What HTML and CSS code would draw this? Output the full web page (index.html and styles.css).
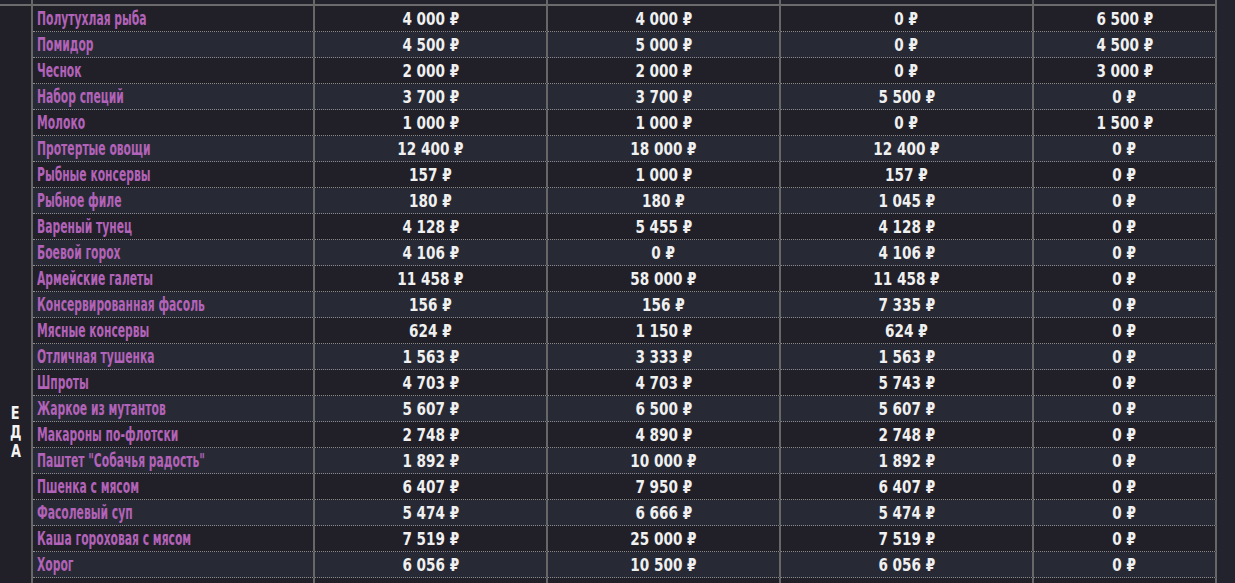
FILE: index.html
```html
<!DOCTYPE html>
<html lang="ru">
<head>
<meta charset="utf-8">
<title>Цены</title>
<link rel="stylesheet" href="styles.css">
</head>
<body>
<table class="prices">
  <colgroup>
    <col class="c-cat">
    <col class="c-name">
    <col class="c-a">
    <col class="c-b">
    <col class="c-c">
    <col class="c-d">
  </colgroup>
  <tbody>
    <tr class="prev"><td></td><td></td><td></td><td></td><td></td><td></td></tr>
    <tr>
      <td class="cat" rowspan="23"><div class="letters"><span>Е</span><span>Д</span><span>А</span></div></td>
      <td class="name"><span>Полутухлая рыба</span></td><td><span>4 000 ₽</span></td><td><span>4 000 ₽</span></td><td><span>0 ₽</span></td><td><span>6 500 ₽</span></td>
    </tr>
    <tr><td class="name"><span>Помидор</span></td><td><span>4 500 ₽</span></td><td><span>5 000 ₽</span></td><td><span>0 ₽</span></td><td><span>4 500 ₽</span></td></tr>
    <tr><td class="name"><span>Чеснок</span></td><td><span>2 000 ₽</span></td><td><span>2 000 ₽</span></td><td><span>0 ₽</span></td><td><span>3 000 ₽</span></td></tr>
    <tr><td class="name"><span>Набор специй</span></td><td><span>3 700 ₽</span></td><td><span>3 700 ₽</span></td><td><span>5 500 ₽</span></td><td><span>0 ₽</span></td></tr>
    <tr><td class="name"><span>Молоко</span></td><td><span>1 000 ₽</span></td><td><span>1 000 ₽</span></td><td><span>0 ₽</span></td><td><span>1 500 ₽</span></td></tr>
    <tr><td class="name"><span>Протертые овощи</span></td><td><span>12 400 ₽</span></td><td><span>18 000 ₽</span></td><td><span>12 400 ₽</span></td><td><span>0 ₽</span></td></tr>
    <tr><td class="name"><span>Рыбные консервы</span></td><td><span>157 ₽</span></td><td><span>1 000 ₽</span></td><td><span>157 ₽</span></td><td><span>0 ₽</span></td></tr>
    <tr><td class="name"><span>Рыбное филе</span></td><td><span>180 ₽</span></td><td><span>180 ₽</span></td><td><span>1 045 ₽</span></td><td><span>0 ₽</span></td></tr>
    <tr><td class="name"><span>Вареный тунец</span></td><td><span>4 128 ₽</span></td><td><span>5 455 ₽</span></td><td><span>4 128 ₽</span></td><td><span>0 ₽</span></td></tr>
    <tr><td class="name"><span>Боевой горох</span></td><td><span>4 106 ₽</span></td><td><span>0 ₽</span></td><td><span>4 106 ₽</span></td><td><span>0 ₽</span></td></tr>
    <tr><td class="name"><span>Армейские галеты</span></td><td><span>11 458 ₽</span></td><td><span>58 000 ₽</span></td><td><span>11 458 ₽</span></td><td><span>0 ₽</span></td></tr>
    <tr><td class="name"><span>Консервированная фасоль</span></td><td><span>156 ₽</span></td><td><span>156 ₽</span></td><td><span>7 335 ₽</span></td><td><span>0 ₽</span></td></tr>
    <tr><td class="name"><span>Мясные консервы</span></td><td><span>624 ₽</span></td><td><span>1 150 ₽</span></td><td><span>624 ₽</span></td><td><span>0 ₽</span></td></tr>
    <tr><td class="name"><span>Отличная тушенка</span></td><td><span>1 563 ₽</span></td><td><span>3 333 ₽</span></td><td><span>1 563 ₽</span></td><td><span>0 ₽</span></td></tr>
    <tr><td class="name"><span>Шпроты</span></td><td><span>4 703 ₽</span></td><td><span>4 703 ₽</span></td><td><span>5 743 ₽</span></td><td><span>0 ₽</span></td></tr>
    <tr><td class="name"><span>Жаркое из мутантов</span></td><td><span>5 607 ₽</span></td><td><span>6 500 ₽</span></td><td><span>5 607 ₽</span></td><td><span>0 ₽</span></td></tr>
    <tr><td class="name"><span>Макароны по-флотски</span></td><td><span>2 748 ₽</span></td><td><span>4 890 ₽</span></td><td><span>2 748 ₽</span></td><td><span>0 ₽</span></td></tr>
    <tr><td class="name"><span>Паштет "Собачья радость"</span></td><td><span>1 892 ₽</span></td><td><span>10 000 ₽</span></td><td><span>1 892 ₽</span></td><td><span>0 ₽</span></td></tr>
    <tr><td class="name"><span>Пшенка с мясом</span></td><td><span>6 407 ₽</span></td><td><span>7 950 ₽</span></td><td><span>6 407 ₽</span></td><td><span>0 ₽</span></td></tr>
    <tr><td class="name"><span>Фасолевый суп</span></td><td><span>5 474 ₽</span></td><td><span>6 666 ₽</span></td><td><span>5 474 ₽</span></td><td><span>0 ₽</span></td></tr>
    <tr><td class="name"><span>Каша гороховая с мясом</span></td><td><span>7 519 ₽</span></td><td><span>25 000 ₽</span></td><td><span>7 519 ₽</span></td><td><span>0 ₽</span></td></tr>
    <tr><td class="name"><span>Хорог</span></td><td><span>6 056 ₽</span></td><td><span>10 500 ₽</span></td><td><span>6 056 ₽</span></td><td><span>0 ₽</span></td></tr>
    <tr><td class="name"></td><td></td><td></td><td></td><td><span>0 ₽</span></td></tr>
  </tbody>
</table>
</body>
</html>
```
FILE: styles.css
```css
html, body {
  margin: 0;
  padding: 0;
  background: #22232c;
  overflow: hidden;
}

.prices {
  table-layout: fixed;
  border-collapse: separate;
  border-spacing: 0;
  width: 1217px;
  font-family: "DejaVu Sans Condensed", "DejaVu Sans", sans-serif;
}

.c-cat { width: 33px; }
.c-name { width: 282px; }
.c-a { width: 233px; }
.c-b { width: 233px; }
.c-c { width: 253px; }
.c-d { width: 183px; }

.prices td {
  box-sizing: border-box;
  padding: 0;
  height: 26px;
  line-height: 25px;
  border-right: 2px solid #676767;
  border-bottom: 1px dotted #8a8a8a;
  text-align: center;
  color: #f0f0f0;
  font-weight: bold;
  font-size: 18px;
  white-space: nowrap;
  overflow: hidden;
}

.prices td span {
  display: inline-block;
  transform: scaleX(0.84);
}

.prices tr:nth-child(even) td { background: #212029; }
.prices tr:nth-child(odd) td { background: #272a35; }

.prices tr.prev td {
  height: 6px;
  line-height: 4px;
  border-bottom: 2px solid #6b6b6b;
  background: #22232c;
}

.prices td.name {
  text-align: left;
  padding-left: 4px;
  font-weight: bold;
  color: #b262b8;
  font-size: 19px;
}

.prices td.name span {
  transform: scaleX(0.63);
  transform-origin: left center;
}

.prices td.cat {
  background: #23252e;
  border-bottom: none;
  vertical-align: top;
  padding-top: 398px;
}

.letters {
  display: flex;
  flex-direction: column;
  align-items: center;
  line-height: 19px;
  font-size: 17px;
  font-weight: bold;
  color: #f4f4f4;
}

.letters span {
  transform: scaleX(0.8);
}
```
